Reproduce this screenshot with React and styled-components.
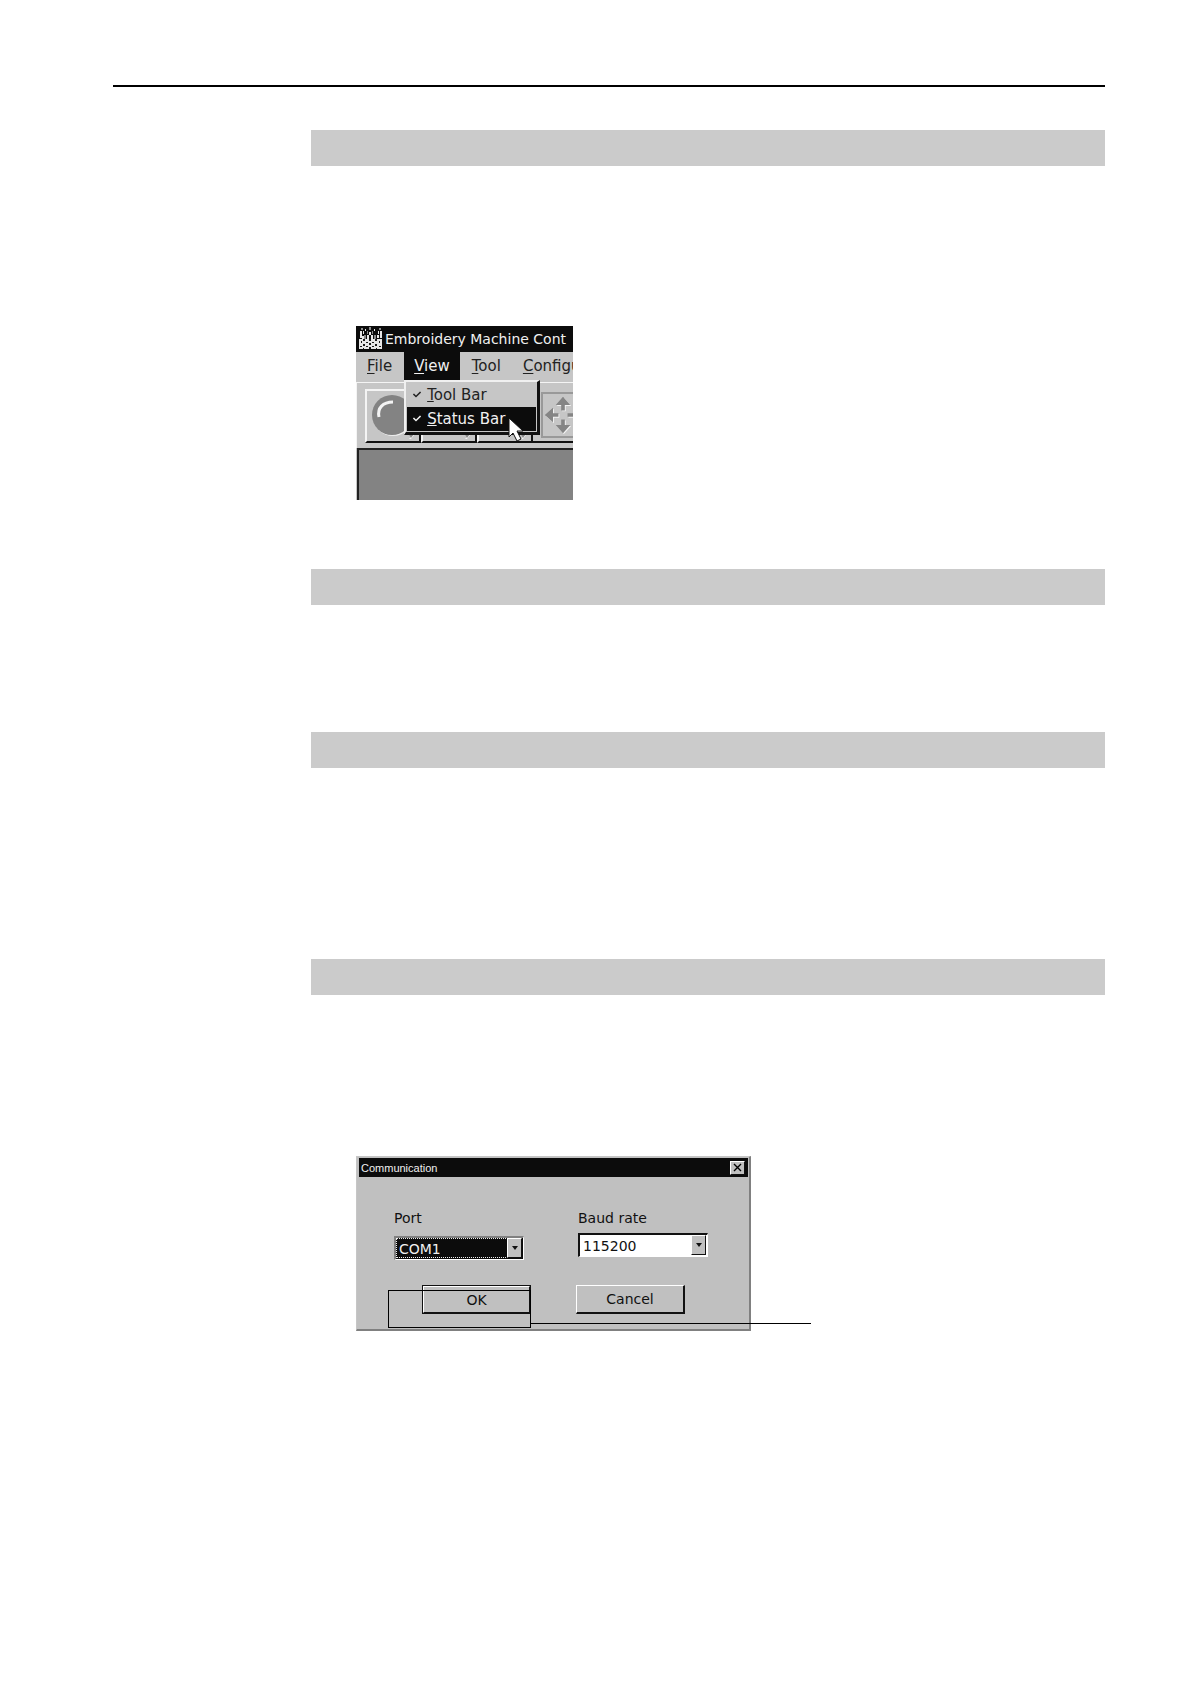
import React, { useState } from 'react';
import styled, { createGlobalStyle, css } from 'styled-components';
import { FaCheck } from 'react-icons/fa';

const menus = ['File', 'View', 'Tool', 'Configu'];
const viewItems = ['Tool Bar', 'Status Bar'];

// first letter of a menu entry is its access key
const AccessLabel = ({ children }) => (
  <span>
    <u>{children[0]}</u>
    {children.slice(1)}
  </span>
);

const MachineIcon = () => (
  <svg width="25" height="24" viewBox="0 0 25 24" shapeRendering="crispEdges">
    <path
      fill="#8a8a8a"
      d="M3 1h2v2H3zM11 0h2v3h-2zM21 1h2v2h-2zM6 8h2v4H6zM16 8h2v4h-2zM9 4h1v3H9zM14 4h1v3h-1z"
    />
    <path
      fill="#e8e8e8"
      d="M2 4h2v7H2zM5 4h1v3H5zM7 2h1v2H7zM11 5h2v3h-2zM16 2h1v2h-1zM20 4h1v3h-1zM22 4h2v7h-2zM9 8h2v4H9zM13 8h2v4h-2zM19 8h2v3h-2zM4 9h2v3H4zM1 12h23v10H1z"
    />
    <path
      fill="#1c1c1c"
      d="M5 12h2v2H5zM11 12h2v2h-2zM17 12h2v2h-2zM3 14h1v2H3zM8 15h2v1H8zM14 15h2v1h-2zM21 14h1v2h-1zM5 17h2v2H5zM11 16h2v2h-2zM17 17h2v2h-2zM2 19h2v1H2zM8 19h2v1H8zM14 19h2v1h-2zM21 19h2v1h-2zM5 21h1v1H5zM11 20h2v2h-2zM18 21h1v1h-1z"
    />
  </svg>
);

const LampIcon = () => (
  <svg width="44" height="44" viewBox="0 0 44 44">
    <circle cx="24" cy="23" r="20" fill="#eee" />
    <circle cx="23" cy="22" r="20" fill="#838383" />
    <path d="M10 24C8 15 14 9 24 9" fill="none" stroke="#f4f4f4" strokeWidth="3" />
  </svg>
);

const arrows =
  'M22 2l8 9h-6v6h-4v-6h-6zM22 42l8-9h-6v-6h-4v6h-6zM2 22l9-8v6h6v4h-6v6zM42 22l-9-8v6h-6v4h6v6z';

const MoveIcon = () => (
  <svg width="44" height="44" viewBox="0 0 44 44">
    <path d={arrows} fill="#f4f4f4" transform="translate(1 1)" />
    <path d={arrows} fill="#858585" />
  </svg>
);

const Corner = () => (
  <svg width="10" height="8" viewBox="0 0 10 8">
    <path d="M10 0L4 8h-2L9 0z" fill="#f4f4f4" />
    <path d="M0 0h9L4 7z" fill="#858585" />
  </svg>
);

const Pointer = () => (
  <svg width="16" height="26" viewBox="0 0 16 26">
    <path
      d="M1 1v19l4-4 4 8 4-2-4-8h6z"
      fill="#fff"
      stroke="#111"
      strokeWidth="1"
    />
  </svg>
);

const ViewMenuFigure = () => (
  <AppWindow>
    <TitleBar>
      <MachineIcon />
      <span>Embroidery Machine Cont</span>
    </TitleBar>
    <MenuBar>
      {menus.map((name) => (
        <MenuSlot key={name}>
          <MenuButton type="button" $open={name === 'View'}>
            <AccessLabel>{name}</AccessLabel>
          </MenuButton>
          {name === 'View' && (
            <DropDown>
              {viewItems.map((item) => (
                <DropItem
                  key={item}
                  type="button"
                  $active={item === 'Status Bar'}
                >
                  <FaCheck />
                  <AccessLabel>{item}</AccessLabel>
                </DropItem>
              ))}
              <PointerSpot>
                <Pointer />
              </PointerSpot>
            </DropDown>
          )}
        </MenuSlot>
      ))}
    </MenuBar>
    <ToolBar>
      <ToolButton type="button" aria-label="start">
        <LampIcon />
        <Corner />
      </ToolButton>
      <ToolButton type="button" aria-label="stop">
        <Corner />
      </ToolButton>
      <ToolButton type="button" aria-label="reset">
        <Corner />
      </ToolButton>
      <MoveButton type="button" aria-label="move">
        <MoveIcon />
      </MoveButton>
    </ToolBar>
    <Workspace />
  </AppWindow>
);

const ComboBox = ({ id, label, options, focused }) => {
  const [value, setValue] = useState(options[0]);
  return (
    <Field $raised={!focused}>
      <label htmlFor={id}>{label}</label>
      <Combo>
        <select
          id={id}
          value={value}
          onChange={(e) => setValue(e.target.value)}
          className={focused ? 'focused' : ''}
        >
          {options.map((option) => (
            <option key={option}>{option}</option>
          ))}
        </select>
        <Arrow>
          <svg width="6" height="4" viewBox="0 0 6 4">
            <path d="M0 0h6L3 4z" fill="#111" />
          </svg>
        </Arrow>
      </Combo>
    </Field>
  );
};

const CommunicationFigure = () => (
  <Dialog>
    <DialogTitle>
      <span>Communication</span>
      <CloseButton type="button" aria-label="close">
        <svg width="9" height="9" viewBox="0 0 9 9">
          <path d="M1 1l7 7M8 1L1 8" stroke="#000" strokeWidth="1.4" />
        </svg>
      </CloseButton>
    </DialogTitle>
    <form onSubmit={(e) => e.preventDefault()}>
      <Fields>
        <ComboBox id="port" label="Port" options={['COM1', 'COM2']} focused />
        <ComboBox id="baud" label="Baud rate" options={['115200', '57600']} />
      </Fields>
      <Buttons>
        <DialogButton type="submit" $isDefault>
          OK
        </DialogButton>
        <DialogButton type="button">Cancel</DialogButton>
      </Buttons>
    </form>
    <Callout />
    <CalloutLine />
  </Dialog>
);

const App = () => {
  return (
    <>
      <GlobalStyle />
      <Page>
        <TopRule />
        <Content>
          <Section $space={403}>
            <Heading />
            <ViewMenuFigure />
          </Section>
          <Section $space={127}>
            <Heading />
          </Section>
          <Section $space={191}>
            <Heading />
          </Section>
          <Section $space={440}>
            <Heading />
            <CommunicationFigure />
          </Section>
        </Content>
      </Page>
    </>
  );
};

const GlobalStyle = createGlobalStyle`
  * {
    box-sizing: border-box;
  }
  body {
    margin: 0;
    background: #fff;
    color: #111;
    font-family: 'DejaVu Sans', sans-serif;
  }
  button,
  select {
    margin: 0;
    color: inherit;
    font: inherit;
  }
  svg {
    display: block;
    flex-shrink: 0;
  }
`;

const Page = styled.main`
  padding: 85px 85px 0 113px;
`;

const TopRule = styled.hr`
  height: 2px;
  margin: 0;
  border: none;
  background: #000;
`;

const Content = styled.div`
  padding: 43px 0 0 198px;
`;

const Section = styled.section`
  min-height: ${(props) => props.$space + 36}px;
`;

const Heading = styled.div`
  height: 36px;
  background: #cbcbcb;
`;

/* program window */
const AppWindow = styled.div`
  width: 217px;
  height: 174px;
  margin: 160px 0 0 45px;
  overflow: hidden;
  display: flex;
  flex-direction: column;
  background: #c6c6c6;
  white-space: nowrap;
`;

const TitleBar = styled.div`
  height: 26px;
  padding-left: 2px;
  display: flex;
  align-items: center;
  gap: 2px;
  flex-shrink: 0;
  background: #0c0c0c;
  color: #f0f0f0;
  font-size: 14px;
`;

const MenuBar = styled.nav`
  height: 30px;
  padding-left: 1px;
  display: flex;
  gap: 2px;
  flex-shrink: 0;
  font-size: 15px;
`;

const MenuSlot = styled.div`
  position: relative;
`;

const MenuButton = styled.button`
  height: 29px;
  padding: 0 10px 2px;
  border: none;
  background: ${(props) => (props.$open ? '#0c0c0c' : 'transparent')};
  color: ${(props) => (props.$open ? '#f0f0f0' : '#222')};
  u {
    text-underline-offset: 2px;
  }
`;

const DropDown = styled.div`
  position: absolute;
  top: 28px;
  left: 0;
  z-index: 1;
  width: 136px;
  padding: 1px;
  border: 2px solid #f0f0f0;
  border-right: 3px solid #111;
  border-bottom: 3px solid #111;
  background: #c6c6c6;
`;

const DropItem = styled.button`
  width: 100%;
  height: 24px;
  padding: 0 0 1px 6px;
  display: flex;
  align-items: center;
  gap: 6px;
  border: none;
  background: ${(props) => (props.$active ? '#0c0c0c' : 'transparent')};
  color: ${(props) => (props.$active ? '#f0f0f0' : '#222')};
  svg {
    width: 8px;
  }
`;

const PointerSpot = styled.div`
  position: absolute;
  top: 35px;
  left: 102px;
`;

const ToolBar = styled.div`
  height: 66px;
  padding: 6px 0 6px 8px;
  display: flex;
  flex-shrink: 0;
  border-top: 1px solid #f4f4f4;
  border-left: 1px solid #f4f4f4;
`;

const ToolButton = styled.button`
  width: 56px;
  height: 54px;
  padding: 2px;
  display: flex;
  align-items: flex-end;
  flex-shrink: 0;
  border: 2px solid #111;
  border-top-color: #f4f4f4;
  border-left-color: #f4f4f4;
  background: #c6c6c6;
  svg:first-child {
    align-self: flex-start;
  }
  svg:last-child {
    margin-left: auto;
    align-self: flex-end;
  }
  svg + svg:last-child {
    margin-left: -6px;
  }
`;

const MoveButton = styled(ToolButton)`
  width: 54px;
  padding: 3px 0 3px 8px;
  border: none;
  border-bottom: 2px solid #111;
  svg:last-child {
    width: 44px;
    height: 46px;
    margin: 0;
    border: 2px solid #999;
  }
`;

const Workspace = styled.div`
  flex: 1;
  margin-left: 1px;
  border-top: 2px solid #222;
  border-left: 2px solid #222;
  background: #838383;
`;

/* communication dialog */
const Dialog = styled.div`
  position: relative;
  width: 395px;
  height: 175px;
  margin: 161px 0 0 45px;
  padding: 1px 1px 0 2px;
  border: 1px solid #c6c6c6;
  border-right: 2px solid #808080;
  border-bottom: 2px solid #808080;
  background: #c0c0c0;
  font-size: 14px;
`;

const DialogTitle = styled.div`
  height: 19px;
  padding: 0 3px 0 2px;
  display: flex;
  align-items: center;
  justify-content: space-between;
  background: #0c0c0c;
  color: #f0f0f0;
  font: 11px 'Liberation Sans', sans-serif;
`;

const bevel = css`
  border: 1px solid #111;
  border-top-color: #fff;
  border-left-color: #fff;
  background: #c0c0c0;
`;

const CloseButton = styled.button`
  ${bevel}
  width: 15px;
  height: 14px;
  padding: 0;
  display: flex;
  align-items: center;
  justify-content: center;
`;

const Fields = styled.div`
  padding: 29px 0 0 35px;
  display: flex;
  gap: 54px;
`;

const Buttons = styled.div`
  padding: 25px 0 0 63px;
  display: flex;
  gap: 45px;
`;

const Field = styled.div`
  width: 130px;
  label {
    display: block;
    height: ${(props) => (props.$raised ? 27 : 30)}px;
    line-height: 24px;
  }
`;

const Combo = styled.div`
  position: relative;
  select {
    display: block;
    width: 100%;
    height: 24px;
    padding: 0 18px 0 3px;
    appearance: none;
    border: 2px solid #111;
    border-right: 1px solid #fff;
    border-bottom: 1px solid #fff;
    border-radius: 0;
    background: #fff;
  }
  .focused {
    border-color: #808080 #fff #fff #808080;
    background: #0c0c0c;
    color: #f0f0f0;
    outline: 1px dotted #f0f0f0;
    outline-offset: -3px;
  }
`;

const Arrow = styled.span`
  ${bevel}
  position: absolute;
  top: 2px;
  right: 2px;
  width: 15px;
  height: 20px;
  display: flex;
  align-items: center;
  justify-content: center;
  pointer-events: none;
`;

const DialogButton = styled.button`
  ${bevel}
  width: 109px;
  height: 29px;
  padding: 0;
  border-width: 1px 2px 2px 1px;
  ${(props) =>
    props.$isDefault &&
    css`
      border-width: 2px;
      outline: 1px solid #111;
      outline-offset: -1px;
    `}
`;

/* lines that point at the OK button */
const Callout = styled.div`
  position: absolute;
  top: 133px;
  left: 31px;
  width: 143px;
  height: 38px;
  border: 1px solid #000;
`;

const CalloutLine = styled.div`
  position: absolute;
  top: 166px;
  left: 173px;
  width: 281px;
  height: 1px;
  background: #000;
`;

export default App;
